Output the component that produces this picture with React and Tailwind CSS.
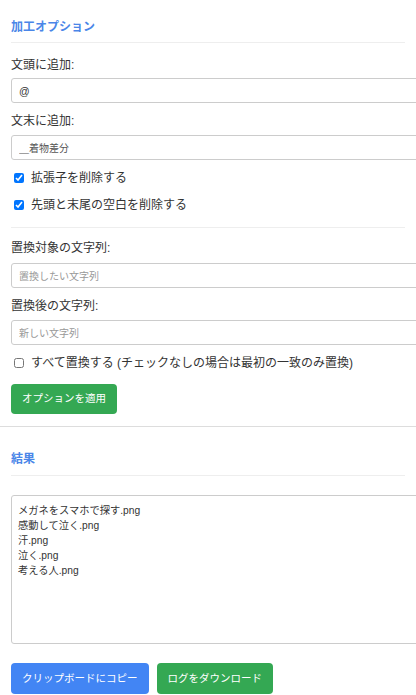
import React from "react";

const font = { fontFamily: '"Liberation Sans", "Noto Sans CJK JP", sans-serif' };

const results = [
  "メガネをスマホで探す.png",
  "感動して泣く.png",
  "汗.png",
  "泣く.png",
  "考える人.png",
].join("\n");

const Field = ({ label, value, placeholder, labelClass, inputClass, valueClass = "text-[#333]" }) => (
  <>
    <label className={`block h-4 leading-4 text-[12px] text-[#333] ${labelClass}`}>{label}</label>
    <input
      type="text"
      defaultValue={value}
      placeholder={placeholder}
      className={`block w-[440px] h-[25px] px-[7px] border border-[#ccc] rounded-[3px] text-[10.5px] placeholder:text-[10px] placeholder:text-[#999] outline-none ${valueClass} ${inputClass}`}
    />
  </>
);

const Check = ({ label, checked, className }) => (
  <label className={`flex items-center h-4 text-[12px] text-[#333] ${className}`}>
    <input
      type="checkbox"
      defaultChecked={checked}
      className="w-[10px] h-[10px] m-0 ml-[3px] accent-[#0075ff]"
    />
    <span className="ml-[7px] leading-4">{label}</span>
  </label>
);

export default function App() {
  return (
    <div className="w-full overflow-hidden bg-white" style={font}>
      {/* 加工オプション */}
      <section className="border-b border-[#ddd] pb-[12px]">
        <div className="px-[11px]">
          <h2 className="mt-[19px] h-4 leading-4 text-[12px] font-bold text-[#4a86e8]">加工オプション</h2>
          <div className="mt-[7px] border-t border-[#eee]" />

          <Field label="文頭に追加:" value="@" labelClass="mt-[14px]" inputClass="mt-[5px]" />
          <Field
            label="文末に追加:"
            value="＿着物差分"
            labelClass="mt-[10px]"
            inputClass="mt-[6px] !text-[10px]"
            valueClass="text-[#555]"
          />

          <Check label="拡張子を削除する" checked className="mt-[10px]" />
          <Check label="先頭と末尾の空白を削除する" checked className="mt-[11px]" />

          <div className="mt-[14px] border-t border-[#eee]" />

          <Field label="置換対象の文字列:" placeholder="置換したい文字列" labelClass="mt-[12px]" inputClass="mt-[7px]" />
          <Field label="置換後の文字列:" placeholder="新しい文字列" labelClass="mt-[10px]" inputClass="mt-[6px]" />

          <Check label="すべて置換する (チェックなしの場合は最初の一致のみ置換)" className="mt-[10px]" />

          <button className="mt-[13px] h-[30px] px-[11px] rounded-[4px] bg-[#34a853] text-white text-[10.5px]">
            オプションを適用
          </button>
        </div>
      </section>

      {/* 結果 */}
      <section className="px-[11px]">
        <h2 className="mt-[24px] h-4 leading-4 text-[12px] font-bold text-[#4a86e8]">結果</h2>
        <div className="mt-[8px] border-t border-[#eee]" />
        <textarea
          readOnly
          value={results}
          className="block mt-[19px] w-[440px] h-[149px] px-[6px] pt-[7px] border border-[#ccc] rounded-[3px] text-[10.25px] leading-[15px] text-[#333] resize-none outline-none"
        />
        <div className="mt-[19px] flex gap-2">
          <button className="h-[31px] px-[11px] rounded-[4px] bg-[#4285f4] text-white text-[10.5px]">
            クリップボードにコピー
          </button>
          <button className="h-[31px] px-[11px] rounded-[4px] bg-[#34a853] text-white text-[10.5px]">
            ログをダウンロード
          </button>
        </div>
      </section>
    </div>
  );
}
